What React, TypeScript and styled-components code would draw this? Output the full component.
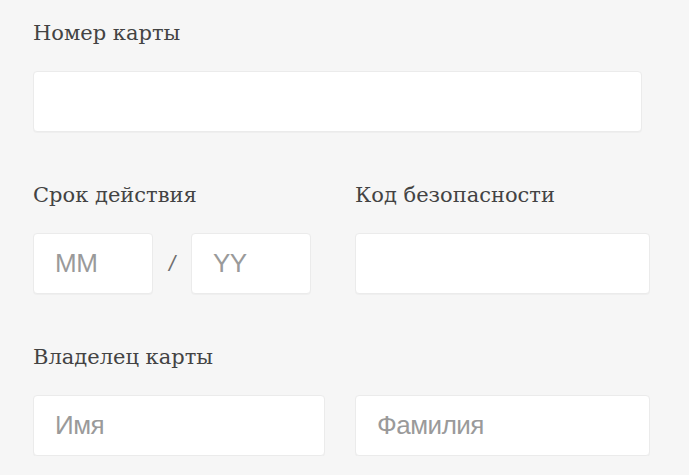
import styled, { createGlobalStyle } from 'styled-components';

const GlobalStyle = createGlobalStyle`
  html, body {
    margin: 0;
    padding: 0;
    background: #f6f6f6;
  }
`;

// #region styled
const Form = styled.form`
  padding: 21px 0 0 33px;
  display: flex;
  flex-direction: column;
  gap: 51px;
`;

const Row = styled.div`
  display: grid;
  grid-template-columns: 292px 295px;
  column-gap: 30px;
`;

const Field = styled.div<{ $width?: number }>`
  display: flex;
  flex-direction: column;
  width: ${p => (p.$width ? `${p.$width}px` : 'auto')};
`;

const Label = styled.label`
  display: block;
  height: 24px;
  line-height: 24px;
  margin-bottom: 26px;
  font-family: 'DejaVu Serif', 'Liberation Serif', serif;
  font-size: 21px;
  color: #434343;
  white-space: nowrap;
`;

const Input = styled.input<{ $width?: number }>`
  box-sizing: border-box;
  height: 61px;
  width: ${p => (p.$width ? `${p.$width}px` : '100%')};
  padding: 0 21px;
  border: 1px solid #ebebeb;
  border-radius: 4px;
  background: #fff;
  box-shadow: 0 1px 1px rgba(0, 0, 0, 0.03);
  font-family: 'Liberation Sans', Arial, sans-serif;
  font-size: 26px;
  letter-spacing: -0.5px;
  color: #333;
  outline: none;

  &::placeholder {
    color: #9a9a9a;
  }
`;

const DateGroup = styled.div`
  display: flex;
  align-items: center;
`;

const Slash = styled.span`
  width: 38px;
  text-align: center;
  font-family: 'Liberation Sans', Arial, sans-serif;
  font-size: 22px;
  font-style: italic;
  color: #6e6e6e;
`;
// #endregion

const App = () => (
  <>
    <GlobalStyle />
    <Form onSubmit={e => e.preventDefault()}>
      <Field $width={609}>
        <Label>Номер карты</Label>
        <Input type="text" />
      </Field>
      <Row>
        <Field>
          <Label>Срок действия</Label>
          <DateGroup>
            <Input type="text" placeholder="MM" $width={120} />
            <Slash>/</Slash>
            <Input type="text" placeholder="YY" $width={120} />
          </DateGroup>
        </Field>
        <Field>
          <Label>Код безопасности</Label>
          <Input type="text" />
        </Field>
      </Row>
      <Row>
        <Field>
          <Label>Владелец карты</Label>
          <Input type="text" placeholder="Имя" />
        </Field>
        <Field>
          <Label>&nbsp;</Label>
          <Input type="text" placeholder="Фамилия" />
        </Field>
      </Row>
    </Form>
  </>
);

export default App;
